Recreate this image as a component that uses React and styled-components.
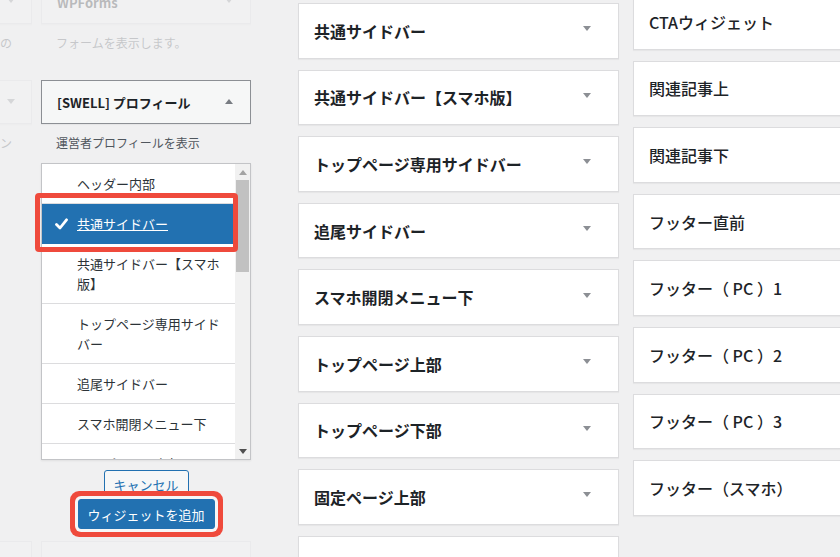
import React from "react";
import styled, { createGlobalStyle, css } from "styled-components";

const GlobalStyle = createGlobalStyle`
  html, body {
    margin: 0;
    padding: 0;
    background: #f0f0f1;
  }
  body {
    font-family: "Noto Sans CJK JP", "Noto Sans", "Liberation Sans", sans-serif;
    color: #1d2327;
    overflow: hidden;
  }
`

const Page = styled.div`
  display: flex;
  align-items: flex-start;
  width: 840px;
  height: 557px;
  overflow: hidden;
`

// left: available widgets
const Available = styled.div`
  display: grid;
  grid-template-columns: 32px 210px;
  column-gap: 9px;
  align-items: start;
  width: 251px;
  margin-top: -20px;
  flex-shrink: 0;
`

const Widget = styled.div`
  overflow: hidden;
  opacity: ${p => (p.$faded ? 0.26 : 1)};
`

const WidgetTop = styled.div`
  display: flex;
  align-items: center;
  justify-content: space-between;
  height: 44px;
  box-sizing: border-box;
  padding: 0 17px 0 15px;
  background: #f6f7f7;
  border: 1px solid ${p => (p.$active ? "#8c8f94" : "#dcdcde")};
  box-shadow: 0 1px 1px rgba(0, 0, 0, 0.04);

  ${p => p.$cut && css`
    border-left: none;
    padding: 0 0 0 7px;
    justify-content: flex-start;
  `}
`

const WidgetTitle = styled.h3`
  margin: 0;
  font-size: 13px;
  font-weight: 600;
  color: #1d2327;
  white-space: nowrap;
`

const Arrow = styled.span`
  width: 0;
  height: 0;
  border-left: 4px solid transparent;
  border-right: 4px solid transparent;
  ${p => p.$up
    ? css`border-bottom: 5px solid ${p.$color || "#787c82"};`
    : css`border-top: 5px solid ${p.$color || "#8c8f94"};`}
  margin-bottom: ${p => p.$lift || 0}px;
`

const Description = styled.div`
  padding: 9px ${p => (p.$cut ? 0 : 15)}px ${p => p.$bottom}px;
  font-size: 12px;
  line-height: 20px;
  color: #50575e;
  white-space: nowrap;
`

const Chooser = styled.div`
  position: relative;
`

const List = styled.div`
  display: flex;
  height: 297px;
  box-sizing: border-box;
  background: #fff;
  border: 1px solid #c3c4c7;
  box-shadow: 0 1px 2px rgba(0, 0, 0, 0.07);
`

const Items = styled.ul`
  flex: 1;
  margin: 0;
  padding: 0;
  list-style: none;
  overflow: hidden;
`

const Item = styled.li`
  display: flex;
  padding: 10px 8px 9px 13px;
  font-size: 13px;
  line-height: 20px;
  color: #2c3338;
  border-bottom: 1px solid #dcdcde;

  ${p => p.$selected && css`
    background: #2271b1;
    color: #fff;
    border-bottom-color: #2271b1;
    span {
      text-decoration: underline;
    }
  `}
`

const Mark = styled.div`
  flex: 0 0 22px;
  display: flex;
  align-items: center;
`

const Scrollbar = styled.div`
  display: flex;
  flex-direction: column;
  width: 15px;
  background: #f1f1f1;
`

const ScrollButton = styled.div`
  height: 16px;
  display: flex;
  align-items: center;
  justify-content: center;
`

const Thumb = styled.div`
  height: 92px;
  margin: 0 1px;
  background: #c1c1c1;
`

const Track = styled.div`
  flex: 1;
`

const Highlight = styled.div`
  position: absolute;
  top: 30px;
  left: -6px;
  width: 203px;
  height: 59px;
  box-sizing: border-box;
  border: 5px solid #ef4a3c;
  border-radius: 4px;
  pointer-events: none;
`

const Actions = styled.div`
  display: flex;
  flex-direction: column;
  align-items: center;
  padding: 10px 0 12px;
`

const CancelButton = styled.button`
  width: 85px;
  height: 29px;
  padding: 0;
  font-family: inherit;
  font-size: 13px;
  color: #2271b1;
  background: #f6f7f7;
  border: 1px solid #2271b1;
  border-radius: 3px;
`

const AddButton = styled.button`
  position: relative;
  z-index: 1;
  width: 137px;
  height: 30px;
  padding: 0;
  font-family: inherit;
  font-size: 13px;
  color: #fff;
  background: #2271b1;
  border: 1px solid #2271b1;
  border-radius: 3px;
  box-shadow: 0 0 0 3px #f7f7f7, 0 0 0 8px #ef4a3c;
`

// middle + right: widget areas
const Areas = styled.div`
  display: flex;
  flex-direction: column;
  gap: 11px;
  flex-shrink: 0;
  width: ${p => p.$width}px;
  margin-left: ${p => p.$left}px;
  margin-top: ${p => p.$top}px;
`

const AreaBox = styled.div`
  display: flex;
  align-items: center;
  justify-content: space-between;
  height: 55.6px;
  box-sizing: border-box;
  padding: 0 27px 0 15px;
  background: #fff;
  border: 1px solid #dcdcde;
  box-shadow: 0 1px 1px rgba(0, 0, 0, 0.04);
  ${p => p.$open && css`border-right: none;`}
`

const AreaTitle = styled.h2`
  margin: 0;
  font-size: 16px;
  font-weight: ${p => p.$weight || 700};
  color: #1d2327;
  white-space: nowrap;
`

const Check = () => (
  <svg width="13" height="12" viewBox="0 0 13 12">
    <path d="M1.5 6.5 L5 10 L11.5 1.8" fill="none" stroke="#fff" strokeWidth="2.8" strokeLinecap="round" strokeLinejoin="round" />
  </svg>
)

const chooserItems = [
  "ヘッダー内部",
  "共通サイドバー",
  "共通サイドバー【スマホ版】",
  "トップページ専用サイドバー",
  "追尾サイドバー",
  "スマホ開閉メニュー下",
  "トップページ上部",
]

const middleAreas = [
  "共通サイドバー",
  "共通サイドバー【スマホ版】",
  "トップページ専用サイドバー",
  "追尾サイドバー",
  "スマホ開閉メニュー下",
  "トップページ上部",
  "トップページ下部",
  "固定ページ上部",
  "固定ページ下部",
]

const rightAreas = [
  "CTAウィジェット",
  "関連記事上",
  "関連記事下",
  "フッター直前",
  "フッター（ PC ）1",
  "フッター（ PC ）2",
  "フッター（ PC ）3",
  "フッター（スマホ）",
]

export default function App() {
  return (
    <>
      <GlobalStyle />
      <Page>
        <Available>
          <Widget $faded>
            <WidgetTop $cut>
              <Arrow $lift={4} />
            </WidgetTop>
            <Description $cut $bottom={27}>の</Description>
          </Widget>
          <Widget $faded>
            <WidgetTop>
              <WidgetTitle>WPForms</WidgetTitle>
              <Arrow $lift={4} />
            </WidgetTop>
            <Description $bottom={27}>フォームを表示します。</Description>
          </Widget>

          <Widget $faded>
            <WidgetTop $cut>
              <Arrow $lift={2} />
            </WidgetTop>
            <Description $cut $bottom={0}>ン</Description>
          </Widget>
          <Widget style={{ overflow: "visible" }}>
            <WidgetTop $active>
              <WidgetTitle>[SWELL] プロフィール</WidgetTitle>
              <Arrow $up $lift={2} />
            </WidgetTop>
            <Description $bottom={10}>運営者プロフィールを表示</Description>
            <Chooser>
              <List>
                <Items>
                  {chooserItems.map((name, i) => (
                    <Item key={name + i} $selected={i === 1}>
                      <Mark>{i === 1 && <Check />}</Mark>
                      <span>{name}</span>
                    </Item>
                  ))}
                </Items>
                <Scrollbar>
                  <ScrollButton>
                    <Arrow $up $color="#a3a3a3" />
                  </ScrollButton>
                  <Thumb />
                  <Track />
                  <ScrollButton>
                    <Arrow $color="#505050" />
                  </ScrollButton>
                </Scrollbar>
              </List>
              <Highlight />
            </Chooser>
            <Actions>
              <CancelButton>キャンセル</CancelButton>
              <AddButton>ウィジェットを追加</AddButton>
            </Actions>
          </Widget>

          <Widget $faded>
            <WidgetTop $cut />
          </Widget>
          <Widget $faded>
            <WidgetTop />
          </Widget>
        </Available>

        <Areas $width={321} $left={47} $top={3}>
          {middleAreas.map(name => (
            <AreaBox key={name}>
              <AreaTitle>{name}</AreaTitle>
              <Arrow $lift={4} />
            </AreaBox>
          ))}
        </Areas>

        <Areas $width={260} $left={14} $top={-6}>
          {rightAreas.map(name => (
            <AreaBox key={name} $open>
              <AreaTitle $weight={500}>{name}</AreaTitle>
            </AreaBox>
          ))}
        </Areas>
      </Page>
    </>
  );
}
